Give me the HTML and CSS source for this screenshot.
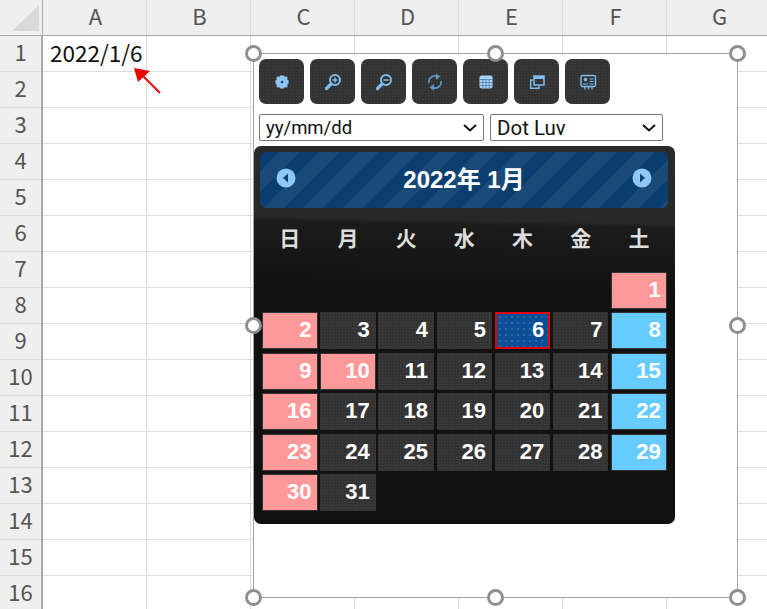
FILE: index.html
```html
<!DOCTYPE html>
<html>
<head>
  <meta charset="UTF-8">
  <title>Calendar</title>
  <link rel="stylesheet" href="styles.css">
</head>
<body>
  <div class="sheet">
    <div class="corner"><svg width="43" height="36"><polygon points="39,5 39,31 12,31" fill="#d9d9d9"/></svg></div>
    <div class="col-head">
      <span>A</span><span>B</span><span>C</span><span>D</span><span>E</span><span>F</span><span>G</span>
    </div>
    <div class="row-head">
      <span>1</span><span>2</span><span>3</span><span>4</span><span>5</span><span>6</span><span>7</span><span>8</span>
      <span>9</span><span>10</span><span>11</span><span>12</span><span>13</span><span>14</span><span>15</span><span>16</span>
    </div>
    <div class="cells">
      <div class="cell-a1">2022/1/6</div>
    </div>
  </div>

  <!-- red arrow pointing at A1 -->
  <svg class="arrow" width="40" height="40" viewBox="0 0 40 40">
    <path d="M29 32 L10 13" stroke="#f00000" stroke-width="2" fill="none"/>
    <polygon points="3,7 19,10 7,21" fill="#f00000"/>
  </svg>

  <div class="frame">
    <span class="handle h-tl"></span><span class="handle h-tc"></span><span class="handle h-tr"></span>
    <span class="handle h-ml"></span><span class="handle h-mr"></span>
    <span class="handle h-bl"></span><span class="handle h-bc"></span><span class="handle h-br"></span>

    <div class="toolbar">
      <button class="tool"><svg width="20" height="20" viewBox="0 0 20 20"><path fill="#8cc6f5" fill-rule="evenodd" d="M8 3.500h4l.5 1.500 1.700-.7 1.500 1.500-.7 1.700 1.500.5v4l-1.500.5.7 1.700-1.500 1.500-1.700-.7-.5 1.500H8l-.5-1.500-1.700.7-1.500-1.500.7-1.700-1.500-.5V8l1.500-.5-.7-1.700 1.500-1.500 1.700.7zM10 8.700a1.300 1.300 0 1 0 0 2.600 1.300 1.300 0 0 0 0-2.600z"/></svg></button>
      <button class="tool"><svg width="20" height="20" viewBox="0 0 20 20"><circle cx="12" cy="8" r="5" fill="none" stroke="#7fbcef" stroke-width="2"/><path d="M8 12 L3.500 16.500" stroke="#7fbcef" stroke-width="3.200" stroke-linecap="round"/><path d="M9.500 8h5M12 5.500v5" stroke="#7fbcef" stroke-width="1.500"/></svg></button>
      <button class="tool"><svg width="20" height="20" viewBox="0 0 20 20"><circle cx="12" cy="8" r="5" fill="none" stroke="#7fbcef" stroke-width="2"/><path d="M8 12 L3.500 16.500" stroke="#7fbcef" stroke-width="3.200" stroke-linecap="round"/><path d="M9.500 8h5" stroke="#7fbcef" stroke-width="1.500"/></svg></button>
      <button class="tool"><svg width="20" height="20" viewBox="0 0 20 20"><path d="M4 11 A6 6 0 0 1 13 4.800 M16 9 A6 6 0 0 1 7 15.200" fill="none" stroke="#5f95c8" stroke-width="1.700"/><polygon points="11,1.500 15.500,4.500 11,8" fill="#5f95c8"/><polygon points="9,12 4.500,15.500 9,18.500" fill="#5f95c8"/></svg></button>
      <button class="tool"><svg width="20" height="20" viewBox="0 0 20 20"><rect x="3.500" y="3.500" width="13" height="13" rx="2" fill="#a4d3f8"/><path d="M3.500 7.500h13M3.500 10.500h13M3.500 13.500h13M6.800 7v9.500M10 7v9.500M13.200 7v9.500" stroke="#5f86a8" stroke-width=".9"/></svg></button>
      <button class="tool"><svg width="20" height="20" viewBox="0 0 20 20"><path d="M6 8H3.700v8.300H12V14" fill="none" stroke="#7fbcef" stroke-width="1.500"/><rect x="7" y="4" width="10" height="9" fill="none" stroke="#7fbcef" stroke-width="1.500"/><rect x="7" y="4" width="10" height="3" fill="#7fbcef"/></svg></button>
      <button class="tool"><svg width="20" height="20" viewBox="0 0 20 20"><rect x="3" y="3.500" width="14.500" height="11" rx="1.500" fill="none" stroke="#7fbcef" stroke-width="1.400"/><circle cx="7.500" cy="7.500" r="1.700" fill="#7fbcef"/><path d="M5 12h5M11.500 7h4M11.500 9.500h4M11.500 12h4" stroke="#7fbcef" stroke-width="1.200"/><path d="M7 14.500v3M10.500 14.500v3M14 14.500v3" stroke="#7fbcef" stroke-width="1.200"/></svg></button>
    </div>

    <div class="pickers">
      <select class="pick pick-format"><option>yy/mm/dd</option></select>
      <select class="pick pick-theme"><option>Dot Luv</option></select>
    </div>

    <div class="calendar">
      <div class="cal-bar">
        <svg width="20" height="20" viewBox="0 0 20 20"><circle cx="10" cy="10" r="9.500" fill="#8ec8fb"/><polygon points="12,5.500 12,14.500 7,10" fill="#16406b"/></svg>
        <span class="cal-title">2022年 1月</span>
        <svg width="20" height="20" viewBox="0 0 20 20"><circle cx="10" cy="10" r="9.500" fill="#8ec8fb"/><polygon points="8,5.500 8,14.500 13,10" fill="#16406b"/></svg>
      </div>
      <div class="week">
        <span>日</span><span>月</span><span>火</span><span>水</span><span>木</span><span>金</span><span>土</span>
      </div>
      <div class="days">
        <i></i><i></i><i></i><i></i><i></i><i></i><b class="sat hol">1</b>
        <b class="hol">2</b><b>3</b><b>4</b><b>5</b><b class="today">6</b><b>7</b><b class="sat">8</b>
        <b class="hol">9</b><b class="hol">10</b><b>11</b><b>12</b><b>13</b><b>14</b><b class="sat">15</b>
        <b class="hol">16</b><b>17</b><b>18</b><b>19</b><b>20</b><b>21</b><b class="sat">22</b>
        <b class="hol">23</b><b>24</b><b>25</b><b>26</b><b>27</b><b>28</b><b class="sat">29</b>
        <b class="hol">30</b><b>31</b>
      </div>
    </div>
  </div>
</body>
</html>
```

FILE: styles.css
```css
html, body {
  margin: 0;
  height: 100%;
  overflow: hidden;
  background: #fff;
}
body {
  position: relative;
  font-family: "Noto Sans CJK JP", "Noto Sans", sans-serif;
}

/* spreadsheet behind the calendar */
.sheet {
  display: grid;
  grid-template-columns: 43px 1fr;
  grid-template-rows: 36px 1fr;
  height: 609px;
  overflow: hidden;
}
.corner {
  background: #efefef;
  border-right: 1px solid #a9a9a9;
  border-bottom: 1px solid #a9a9a9;
  box-sizing: border-box;
}
.corner svg {
  display: block;
}
.col-head {
  display: flex;
  background: #efefef;
  border-bottom: 1px solid #a9a9a9;
  box-sizing: border-box;
}
.col-head span {
  flex: 0 0 104px;
  box-sizing: border-box;
  padding-left: 2px;
  border-right: 1px solid #dcdcdc;
  text-align: center;
  color: #555;
  font-size: 22px;
  line-height: 30px;
}
.row-head {
  display: flex;
  flex-direction: column;
  background: #efefef;
  border-right: 2px solid #a9a9a9;
  box-sizing: border-box;
}
.row-head span {
  flex: 0 0 36px;
  box-sizing: border-box;
  border-bottom: 1px solid #dcdcdc;
  text-align: center;
  color: #555;
  font-size: 22px;
  line-height: 31px;
}
.cells {
  background-image:
    linear-gradient(to right, transparent 103px, #dedede 103px),
    linear-gradient(to bottom, transparent 35px, #dedede 35px);
  background-size: 104px 36px;
}
.cell-a1 {
  padding-left: 7px;
  font-size: 22.500px;
  line-height: 33px;
  color: #111;
}
.arrow {
  position: absolute;
  left: 131px;
  top: 61px;
}

/* selected object */
.frame {
  position: absolute;
  left: 253px;
  top: 53px;
  width: 485px;
  height: 545px;
  box-sizing: border-box;
  border: 1px solid #a3a3a3;
  background: #fff;
  padding: 5px;
}
.handle {
  position: absolute;
  width: 17px;
  height: 17px;
  box-sizing: border-box;
  border: 3px solid #8f8f8f;
  border-radius: 50%;
  background: #fff;
  z-index: 2;
}
.h-tl, .h-ml, .h-bl { left: -9px; }
.h-tc, .h-bc { left: 233px; }
.h-tr, .h-mr, .h-br { right: -9px; }
.h-tl, .h-tc, .h-tr { top: -9px; }
.h-ml, .h-mr { top: 263px; }
.h-bl, .h-bc, .h-br { bottom: -9px; }

.toolbar {
  display: flex;
  gap: 6px;
  margin-bottom: 10px;
}
.tool {
  width: 45px;
  height: 45px;
  padding: 0;
  border: none;
  border-radius: 7px;
  background-color: #333;
  background-image: radial-gradient(#444 1px, transparent 1px);
  background-size: 3px 3px;
  display: flex;
  align-items: center;
  justify-content: center;
}
.pickers {
  display: flex;
  gap: 6px;
  margin-bottom: 5px;
}
.pick {
  appearance: none;
  height: 27px;
  box-sizing: border-box;
  padding: 0 0 0 6px;
  border: 1px solid #767676;
  border-radius: 2px;
  font-family: Roboto, sans-serif;
  color: #111;
  background: #fff url("data:image/svg+xml,%3Csvg xmlns='http://www.w3.org/2000/svg' width='14' height='8'%3E%3Cpath d='M1 1l6 5.500 6-5.500' fill='none' stroke='%23111' stroke-width='2'/%3E%3C/svg%3E") no-repeat right 6px center;
}
.pick-format { width: 225px; font-size: 18.500px; }
.pick-theme { width: 173px; font-size: 20.500px; }

/* calendar */
.calendar {
  width: 421px;
  height: 378px;
  margin-left: -5px;
  box-sizing: border-box;
  padding: 6px 7px 6px 6px;
  border-radius: 7px;
  background: linear-gradient(181deg, #2b2b2b 0, #272727 78px, #1c1c1c 82px, #111 150px);
}
.cal-bar {
  height: 56px;
  box-sizing: border-box;
  padding: 0 16px 4px;
  border-radius: 6px;
  display: flex;
  align-items: center;
  justify-content: space-between;
  background: repeating-linear-gradient(135deg, #0b3e70 0, #0b3e70 14px, #1a4a78 14px, #1a4a78 28px);
}
.cal-title {
  margin-bottom: 2px;
  color: #fff;
  font-family: "Liberation Sans", "Noto Sans CJK JP", sans-serif;
  font-weight: bold;
  font-size: 24px;
}
.week {
  display: grid;
  grid-template-columns: repeat(7, 55.500px);
  gap: 2.700px;
  padding: 15px 2px 0;
  height: 49px;
  box-sizing: border-box;
  text-align: center;
  color: #ddd;
  font-weight: bold;
  font-size: 21px;
  line-height: 28px;
}
.days {
  display: grid;
  grid-template-columns: repeat(7, 55.500px);
  grid-auto-rows: 37px;
  gap: 3.500px 2.700px;
  padding: 0 2px;
  margin-top: 14.500px;
}
.days b {
  box-sizing: border-box;
  padding-right: 6px;
  text-align: right;
  font-family: "Liberation Sans", sans-serif;
  font-size: 22px;
  line-height: 35px;
  color: #fff;
  background-color: #333;
  background-image: radial-gradient(#444 1px, transparent 1px);
  background-size: 3px 3px;
  background-clip: padding-box;
}
.days .hol {
  background: #ff9999;
  border: 1px solid #333;
  line-height: 33px;
  padding-right: 5px;
}
.days .sat {
  background: #66ccff;
  border: 1px solid #333;
  line-height: 33px;
  padding-right: 5px;
}
.days .sat.hol {
  background: #ff9999;
}
.days .today {
  background-color: #0a4f96;
  background-image: radial-gradient(#2c6aa8 1.500px, transparent 1.500px);
  background-size: 6px 6px;
  border: 2px solid #e60000;
  line-height: 31px;
  padding-right: 4px;
}
```
